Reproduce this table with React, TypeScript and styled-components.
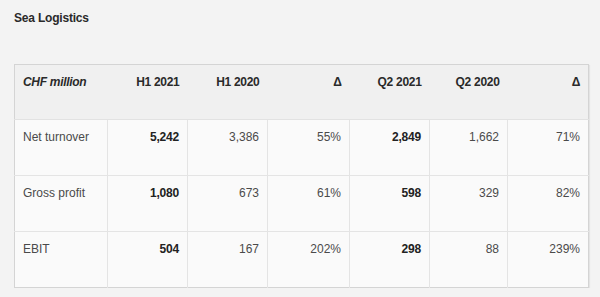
import React from 'react'
import styled, { createGlobalStyle } from 'styled-components'

const GlobalStyle = createGlobalStyle`
  html, body {
    margin: 0;
    padding: 0;
    background: #f3f3f3;
  }
  body {
    font-family: "Liberation Sans", Arial, sans-serif;
    color: #333;
  }
`

const Page = styled.div`
  padding: 11px 14px 0 14px;
`

const Title = styled.h2`
  margin: 0 0 39px 0;
  font-size: 12px;
  line-height: 14px;
  font-weight: 700;
  letter-spacing: -0.2px;
  color: #2a2a2a;
`

const Table = styled.table`
  width: 574px;
  border-collapse: collapse;
  table-layout: fixed;
  border: 1px solid #d4d4d4;
  box-shadow: 1px 1px 1px rgba(0, 0, 0, 0.06);
  font-size: 12px;
  line-height: 14px;
`

const HeadCell = styled.th<{ $first?: boolean }>`
  height: 55px;
  box-sizing: border-box;
  padding: 10px 8px 0 8px;
  vertical-align: top;
  background: #f0f0f0;
  color: #2a2a2a;
  font-weight: 700;
  letter-spacing: -0.3px;
  text-align: ${p => (p.$first ? 'left' : 'right')};
  font-style: ${p => (p.$first ? 'italic' : 'normal')};
  border-bottom: 1px solid #e2e2e2;
`

const Cell = styled.td<{ $first?: boolean; $strong?: boolean }>`
  height: 56px;
  box-sizing: border-box;
  padding: 10px 8px 0 8px;
  vertical-align: top;
  background: #fafafa;
  color: ${p => (p.$strong ? '#222' : '#4a4a4a')};
  font-weight: ${p => (p.$strong ? 700 : 400)};
  letter-spacing: ${p => (p.$strong ? '-0.2px' : '0')};
  text-align: ${p => (p.$first ? 'left' : 'right')};
  border: 1px solid #e4e4e4;
  &:first-child {
    border-left: none;
  }
  &:last-child {
    border-right: none;
  }
`

const Row = styled.tr`
  &:last-child td {
    border-bottom: none;
  }
`

const widths = [93, 80, 80, 82, 80, 78, 81]
const headers = ['CHF million', 'H1 2021', 'H1 2020', 'Δ', 'Q2 2021', 'Q2 2020', 'Δ']

const rows = [
  ['Net turnover', '5,242', '3,386', '55%', '2,849', '1,662', '71%'],
  ['Gross profit', '1,080', '673', '61%', '598', '329', '82%'],
  ['EBIT', '504', '167', '202%', '298', '88', '239%'],
]

// bold columns: current period figures
const strongCols = [1, 4]

export default function App() {
  return (
    <>
      <GlobalStyle />
      <Page>
        <Title>Sea Logistics</Title>
        <Table>
          <colgroup>
            {widths.map((w, i) => (
              <col key={i} style={{ width: w }} />
            ))}
          </colgroup>
          <thead>
            <tr>
              {headers.map((h, i) => (
                <HeadCell key={i} $first={i === 0}>
                  {h}
                </HeadCell>
              ))}
            </tr>
          </thead>
          <tbody>
            {rows.map(r => (
              <Row key={r[0]}>
                {r.map((v, i) => (
                  <Cell key={i} $first={i === 0} $strong={strongCols.includes(i)}>
                    {v}
                  </Cell>
                ))}
              </Row>
            ))}
          </tbody>
        </Table>
      </Page>
    </>
  )
}
